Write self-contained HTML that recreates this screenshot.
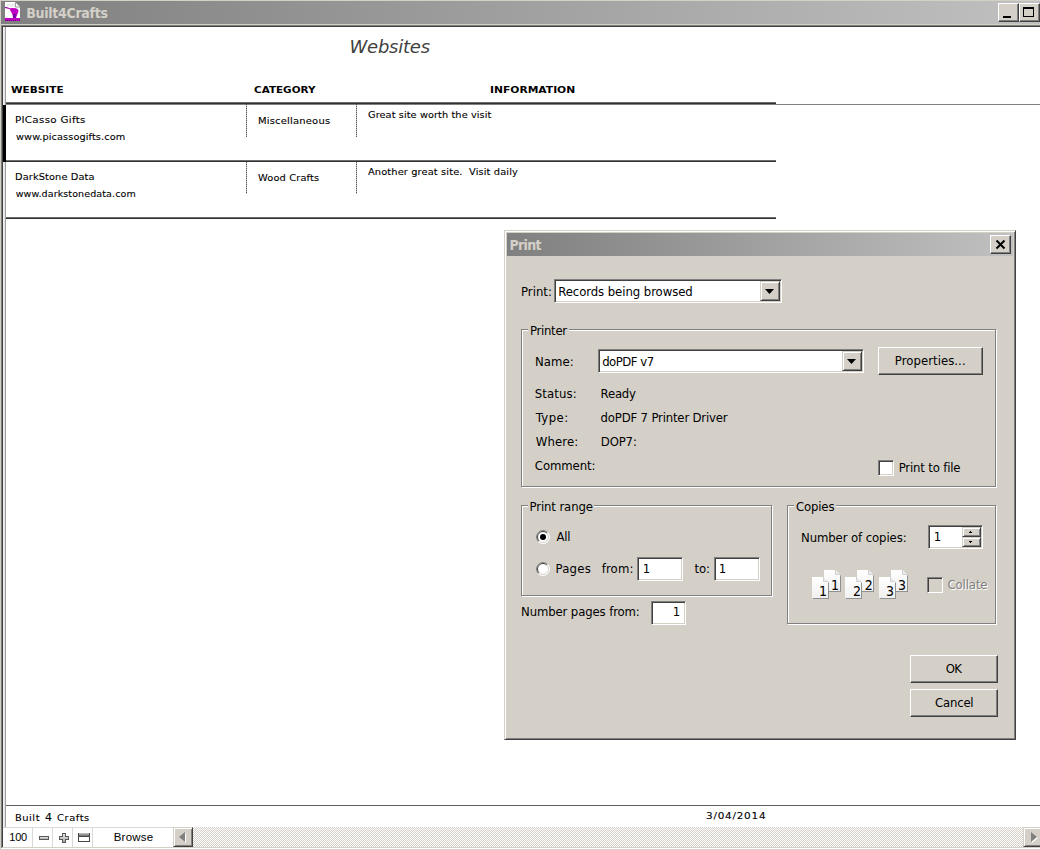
<!DOCTYPE html>
<html>
<head>
<meta charset="utf-8">
<title>Built4Crafts</title>
<style>
html,body{margin:0;padding:0;}
body{width:1040px;height:850px;overflow:hidden;background:#d4d0c8;position:relative;font-family:"DejaVu Sans","Liberation Sans",sans-serif;color:#000;}
.a{position:absolute;}
.t{position:absolute;white-space:nowrap;line-height:1;}
#titlebar{left:1px;top:1px;width:1039px;height:23px;background:linear-gradient(to right,#808080 0%,#c0c0c0 100%);}
.raised{background:#d4d0c8;box-sizing:border-box;border:1px solid;border-color:#fff #404040 #404040 #fff;box-shadow:inset -1px -1px 0 #808080;}
.raised2{background:#d4d0c8;box-sizing:border-box;border:1px solid;border-color:#d4d0c8 #404040 #404040 #d4d0c8;box-shadow:inset 1px 1px 0 #fff, inset -1px -1px 0 #808080;}
.sunken{background:#fff;box-sizing:border-box;border:1px solid;border-color:#808080 #fff #fff #808080;box-shadow:inset 1px 1px 0 #404040, inset -1px -1px 0 #d4d0c8;}
.group{box-sizing:border-box;border:1px solid #808080;border-right-color:#808080;box-shadow:1px 1px 0 #fff, inset 1px 1px 0 #fff;}
.gl{background:#d4d0c8;height:4px;}
.hline{left:6px;width:770px;height:2px;background:linear-gradient(to bottom,#6c6c6c 0,#6c6c6c 1px,#303232 1px,#303232 2px);}
.dot{width:1px;background:repeating-linear-gradient(to bottom,#505050 0,#505050 1px,#c0c0c0 1px,#c0c0c0 2px);}
.sep{top:828px;width:1px;height:19px;background:#d8d8d8;}
#track{background-color:#fff;background-image:linear-gradient(45deg,#d4d0c8 25%,transparent 25%,transparent 75%,#d4d0c8 75%),linear-gradient(45deg,#d4d0c8 25%,transparent 25%,transparent 75%,#d4d0c8 75%);background-size:2px 2px;background-position:0 0,1px 1px;}
.v{font-family:"DejaVu Sans","Liberation Sans",sans-serif;}
.k{-webkit-text-stroke:0.1px currentColor;}
.d{font-family:"DejaVu Sans Condensed","Liberation Sans",sans-serif;}
.l{font-family:"Liberation Sans",sans-serif;}
</style>
</head>
<body>
<!-- main window chrome -->
<div id="titlebar" class="a"></div>
<svg class="a" style="left:5px;top:2px" width="15" height="19" viewBox="0 0 15 19">
  <path d="M0 0H10L15 5V19H0Z" fill="#fff"/>
  <path d="M1.500 1.500H9.500V4.700H1.500Z" fill="#ececec"/>
  <path d="M10.400 0.300V5H15" fill="none" stroke="#8c8c8c" stroke-width="0.900"/>
  <path d="M0 5L1.500 5L5 6.200L5 7.300L0 6.100Z" fill="#c000c0"/>
  <path d="M0 5H1V6H0Z" fill="#5a189a"/>
  <path d="M5 6.300L7 6L11 6.200L13 7.500L13.600 9L12.500 12L11.500 14.500L11 16L8 16L7.500 13L6.500 10.500L5.200 8.500Z" fill="#c000c0"/>
  <path d="M8.300 12H10.700V16H8.300Z" fill="#6a00a0"/>
  <path d="M0 16H15V19H0Z" fill="#c000c0"/>
  <path d="M0 18.500H15" stroke="#6a007a" stroke-width="1" stroke-dasharray="1 1"/>
</svg>
<div class="a raised" style="left:998px;top:3px;width:21px;height:19px"></div>
<div class="a" style="left:1003px;top:16px;width:8px;height:2px;background:#000"></div>
<div class="a raised" style="left:1019px;top:3px;width:21px;height:19px"></div>
<div class="a" style="left:1023px;top:7px;width:11px;height:10px;box-sizing:border-box;border:1px solid #000;border-top-width:2px"></div>

<div class="a" style="left:1px;top:25px;width:1039px;height:823px;background:#808080"></div>
<div class="a" style="left:2px;top:26px;width:1038px;height:821px;background:#404040"></div>
<div class="a" style="left:3px;top:27px;width:1037px;height:820px;background:#fff"></div>
<div class="a" style="left:3px;top:27px;width:3px;height:800px;background:linear-gradient(to right,#efefef 0,#efefef 1px,#e6e6e6 1px,#e6e6e6 2px,#a0a0a0 2px,#a0a0a0 3px)"></div>

<!-- layout -->
<div class="a" style="left:6px;top:104px;width:1034px;height:1px;background:#808080"></div>
<div class="a hline" style="top:102px"></div>
<div class="a hline" style="top:160px"></div>
<div class="a hline" style="top:217px"></div>
<div class="a" style="left:3px;top:105px;width:3px;height:57px;background:#000"></div>
<div class="a dot" style="left:246px;top:104px;height:33px"></div>
<div class="a dot" style="left:356px;top:104px;height:33px"></div>
<div class="a dot" style="left:246px;top:162px;height:32px"></div>
<div class="a dot" style="left:356px;top:162px;height:32px"></div>
<div class="a" style="left:6px;top:805px;width:1034px;height:1px;background:#606060"></div>

<!-- status bar -->
<div class="a" style="left:3px;top:827px;width:1037px;height:1px;background:#d8d8d8"></div>
<div class="a sep" style="left:32px"></div>
<div class="a sep" style="left:52px"></div>
<div class="a sep" style="left:72px"></div>
<div class="a sep" style="left:92px"></div>
<svg class="a" style="left:38px;top:832px" width="54" height="12" viewBox="0 0 54 12">
  <defs><linearGradient id="ig" x1="0" y1="0" x2="0" y2="1"><stop offset="0" stop-color="#e8e8e8"/><stop offset="1" stop-color="#a8a8a8"/></linearGradient>
  <linearGradient id="wg" x1="0" y1="0" x2="0" y2="1"><stop offset="0" stop-color="#c8c8c8"/><stop offset="1" stop-color="#6c6c6c"/></linearGradient></defs>
  <rect x="1" y="4" width="10" height="4" fill="#5c5858"/><rect x="2" y="5" width="8" height="2" fill="url(#ig)"/>
  <path d="M24 1h4v3h3v4h-3v3h-4v-3h-3v-4h3z" fill="#5c5858"/><path d="M25 2h2v3h3v2h-3v3h-2v-3h-3v-2h3z" fill="url(#ig)"/>
  <rect x="40" y="1" width="12" height="9" fill="#484848"/><rect x="41" y="1" width="10" height="3" fill="url(#wg)"/><rect x="41" y="5" width="10" height="4" fill="#fff"/>
</svg>
<div id="track" class="a" style="left:193px;top:827px;width:830px;height:20px"></div>
<div class="a raised2" style="left:173px;top:827px;width:20px;height:20px"></div>
<svg class="a" style="left:178px;top:832px" width="9" height="11" viewBox="0 0 9 11"><path d="M8 1V11L2 6Z" fill="#fff"/><path d="M7 0V10L1 5Z" fill="#808080"/></svg>
<div class="a raised2" style="left:1023px;top:827px;width:20px;height:20px"></div>
<svg class="a" style="left:1030px;top:832px" width="9" height="11" viewBox="0 0 9 11"><path d="M2 1V11L8 6Z" fill="#fff"/><path d="M1 0V10L7 5Z" fill="#808080"/></svg>
<div class="a" style="left:2px;top:847px;width:1038px;height:1px;background:#d4d0c8"></div>
<div class="a" style="left:1px;top:848px;width:1039px;height:1px;background:#fff"></div>
<div class="a" style="left:0;top:849px;width:1040px;height:1px;background:#d4d0c8"></div>

<!-- dialog -->
<div class="a raised2" style="left:504px;top:230px;width:512px;height:510px"></div>
<div class="a" style="left:507px;top:233px;width:506px;height:23px;background:linear-gradient(to right,#808080 0%,#c0c0c0 100%)"></div>
<div class="a raised" style="left:990px;top:235px;width:21px;height:19px"></div>
<svg class="a" style="left:995px;top:239px" width="11" height="11" viewBox="0 0 11 11"><path d="M1.500 1.500L9.500 9.500M9.500 1.500L1.500 9.500" stroke="#000" stroke-width="2"/></svg>

<!-- print combo -->
<div class="a sunken" style="left:554px;top:279px;width:228px;height:24px"></div>
<div class="a raised2" style="left:760px;top:281px;width:20px;height:20px"></div>
<svg class="a" style="left:765px;top:289px" width="9" height="5" viewBox="0 0 9 5"><path d="M0 0H9L4.500 5Z" fill="#000"/></svg>

<!-- printer group -->
<div class="a group" style="left:521px;top:329px;width:475px;height:158px"></div>
<div class="a gl" style="left:528px;top:328px;width:41px"></div>
<div class="a sunken" style="left:598px;top:349px;width:266px;height:24px"></div>
<div class="a raised2" style="left:842px;top:351px;width:20px;height:20px"></div>
<svg class="a" style="left:847px;top:359px" width="9" height="5" viewBox="0 0 9 5"><path d="M0 0H9L4.500 5Z" fill="#000"/></svg>
<div class="a raised" style="left:878px;top:347px;width:105px;height:28px"></div>
<div class="a sunken" style="left:878px;top:460px;width:16px;height:16px"></div>

<!-- print range group -->
<div class="a group" style="left:521px;top:505px;width:251px;height:91px"></div>
<div class="a gl" style="left:528px;top:504px;width:66px"></div>
<svg class="a" style="left:536px;top:530px" width="14" height="14" viewBox="0 0 14 14">
  <circle cx="7" cy="7" r="6.500" fill="#fff"/>
  <path d="M2.400 11.600A6.500 6.500 0 0 1 11.600 2.400" fill="none" stroke="#808080" stroke-width="1"/>
  <path d="M3.100 10.900A5.500 5.500 0 0 1 10.900 3.100" fill="none" stroke="#404040" stroke-width="1"/>
  <path d="M11.600 2.400A6.500 6.500 0 0 1 2.400 11.600" fill="none" stroke="#fff" stroke-width="1"/>
  <path d="M10.900 3.100A5.500 5.500 0 0 1 3.100 10.900" fill="none" stroke="#d4d0c8" stroke-width="1"/>
  <circle cx="7" cy="7" r="3" fill="#000"/>
</svg>
<svg class="a" style="left:536px;top:562px" width="14" height="14" viewBox="0 0 14 14">
  <circle cx="7" cy="7" r="6.500" fill="#fff"/>
  <path d="M2.400 11.600A6.500 6.500 0 0 1 11.600 2.400" fill="none" stroke="#808080" stroke-width="1"/>
  <path d="M3.100 10.900A5.500 5.500 0 0 1 10.900 3.100" fill="none" stroke="#404040" stroke-width="1"/>
  <path d="M11.600 2.400A6.500 6.500 0 0 1 2.400 11.600" fill="none" stroke="#fff" stroke-width="1"/>
  <path d="M10.900 3.100A5.500 5.500 0 0 1 3.100 10.900" fill="none" stroke="#d4d0c8" stroke-width="1"/>
</svg>
<div class="a sunken" style="left:637px;top:557px;width:46px;height:24px"></div>
<div class="a sunken" style="left:714px;top:557px;width:46px;height:24px"></div>
<div class="a sunken" style="left:651px;top:601px;width:35px;height:24px"></div>

<!-- copies group -->
<div class="a group" style="left:787px;top:505px;width:209px;height:119px"></div>
<div class="a gl" style="left:794px;top:504px;width:42px"></div>
<div class="a sunken" style="left:928px;top:525px;width:55px;height:24px"></div>
<div class="a raised2" style="left:962px;top:527px;width:19px;height:10px"></div>
<div class="a raised2" style="left:962px;top:537px;width:19px;height:10px"></div>
<svg class="a" style="left:969px;top:531px" width="3" height="2" viewBox="0 0 3 2"><path d="M1 0h1v1h1v1h-3v-1h1z" fill="#000"/></svg>
<svg class="a" style="left:969px;top:541px" width="3" height="2" viewBox="0 0 3 2"><path d="M0 0h3v1h-1v1h-1v-1h-1z" fill="#000"/></svg>
<!-- page icons -->
<svg class="a" style="left:811px;top:570px" width="98" height="30" viewBox="0 0 98 30">
  <defs>
    <linearGradient id="pg" x1="0" y1="0" x2="0" y2="1"><stop offset="0" stop-color="#ffffff"/><stop offset="1" stop-color="#f0f0f0"/></linearGradient>
    <g id="pgicon">
      <path d="M1 1H12L17 6V22H1Z" fill="#909090"/>
      <path d="M0 0H11.500L16 4.500V21H0Z" fill="url(#pg)"/>
      <path d="M11.500 0V4.500H16Z" fill="#ececec"/>
      <path d="M11.500 0V4.500H16" fill="none" stroke="#c0c0c0" stroke-width="0.700"/>
    </g>
  </defs>
  <use href="#pgicon" x="13" y="0"/><use href="#pgicon" x="1" y="7"/>
  <use href="#pgicon" x="46" y="0"/><use href="#pgicon" x="34" y="7"/>
  <use href="#pgicon" x="80" y="0"/><use href="#pgicon" x="68" y="7"/>
</svg>
<div class="a" style="left:927px;top:577px;width:16px;height:16px;box-sizing:border-box;border:1px solid;border-color:#808080 #fff #fff #808080;box-shadow:inset 1px 1px 0 #404040, inset -1px -1px 0 #d4d0c8;background:#d4d0c8"></div>

<!-- buttons -->
<div class="a raised" style="left:910px;top:655px;width:88px;height:28px"></div>
<div class="a raised" style="left:910px;top:689px;width:88px;height:28px"></div>

<!-- texts -->
<div class="t d" style="left:26.2px;top:6px;font-size:14px;font-weight:bold;color:#d4d0c8;letter-spacing:-0.29px;">Built4Crafts</div>
<div class="t v" style="left:349.5px;top:38px;font-size:18px;font-style:italic;color:#404040;letter-spacing:-0.23px;">Websites</div>
<div class="t v" style="left:10.7px;top:85px;font-size:9.5px;font-weight:bold;transform:scaleX(1.107);transform-origin:0 0;">WEBSITE</div>
<div class="t v" style="left:253.7px;top:85px;font-size:9.5px;font-weight:bold;transform:scaleX(1.096);transform-origin:0 0;">CATEGORY</div>
<div class="t v" style="left:489.9px;top:85px;font-size:9.5px;font-weight:bold;transform:scaleX(1.129);transform-origin:0 0;">INFORMATION</div>
<div class="t v k" style="left:15.4px;top:115px;font-size:9.5px;letter-spacing:0.27px;transform:scaleX(1.087);transform-origin:0 0;">PICasso Gifts</div>
<div class="t v k" style="left:15.5px;top:132px;font-size:9.5px;letter-spacing:0.09px;transform:scaleX(1.026);transform-origin:0 0;">www.picassogifts.com</div>
<div class="t v k" style="left:257.5px;top:116px;font-size:9.5px;letter-spacing:0.17px;transform:scaleX(1.05);transform-origin:0 0;">Miscellaneous</div>
<div class="t v k" style="left:367.7px;top:110px;font-size:9.5px;letter-spacing:0.08px;transform:scaleX(1.027);transform-origin:0 0;">Great site worth the visit</div>
<div class="t v k" style="left:15.4px;top:172px;font-size:9.5px;letter-spacing:0.11px;transform:scaleX(1.031);transform-origin:0 0;">DarkStone Data</div>
<div class="t v k" style="left:15.7px;top:189px;font-size:9.5px;letter-spacing:0.11px;">www.darkstonedata.com</div>
<div class="t v k" style="left:257.9px;top:173px;font-size:9.5px;letter-spacing:0.13px;transform:scaleX(1.035);transform-origin:0 0;">Wood Crafts</div>
<div class="t v k" style="left:368.0px;top:167px;font-size:9.5px;letter-spacing:0.11px;transform:scaleX(1.036);transform-origin:0 0;">Another great site.&nbsp; Visit daily</div>
<div class="t v k" style="left:14.8px;top:813.5px;font-size:9px;letter-spacing:0.47px;transform:scaleX(1.1);transform-origin:0 0;">Built</div>
<div class="t v k" style="left:44.9px;top:811.5px;font-size:11px;">4</div>
<div class="t v k" style="left:57.0px;top:813.5px;font-size:9px;letter-spacing:0.52px;transform:scaleX(1.1);transform-origin:0 0;">Crafts</div>
<div class="t v k" style="left:705.8px;top:811px;font-size:9.5px;letter-spacing:0.68px;transform:scaleX(1.1);transform-origin:0 0;">3/04/2014</div>
<div class="t l" style="left:9.3px;top:831.5px;font-size:11px;letter-spacing:-0.25px;">100</div>
<div class="t l" style="left:113.7px;top:831.5px;font-size:11.5px;letter-spacing:0.24px;">Browse</div>
<div class="t d" style="left:509.5px;top:238px;font-size:14px;font-weight:bold;color:#d4d0c8;letter-spacing:-0.7px;">Print</div>
<div class="t d" style="left:521.0px;top:285px;font-size:13px;">Print:</div>
<div class="t d" style="left:558.2px;top:285px;font-size:13px;letter-spacing:-0.07px;">Records being browsed</div>
<div class="t d" style="left:530.0px;top:323.5px;font-size:13px;letter-spacing:-0.3px;">Printer</div>
<div class="t d" style="left:535.0px;top:355px;font-size:13px;letter-spacing:0.05px;">Name:</div>
<div class="t d" style="left:602.2px;top:355px;font-size:13px;letter-spacing:-0.49px;">doPDF v7</div>
<div class="t d" style="left:894.8px;top:354px;font-size:13px;letter-spacing:0.05px;">Properties...</div>
<div class="t d" style="left:534.8px;top:387px;font-size:13px;letter-spacing:0.12px;">Status:</div>
<div class="t d" style="left:600.6px;top:387px;font-size:13px;letter-spacing:-0.22px;">Ready</div>
<div class="t d" style="left:535.8px;top:411px;font-size:13px;letter-spacing:0.45px;">Type:</div>
<div class="t d" style="left:600.6px;top:411px;font-size:13px;letter-spacing:-0.18px;">doPDF 7 Printer Driver</div>
<div class="t d" style="left:535.8px;top:435px;font-size:13px;letter-spacing:0.1px;">Where:</div>
<div class="t d" style="left:600.8px;top:435px;font-size:13px;letter-spacing:-0.15px;">DOP7:</div>
<div class="t d" style="left:534.8px;top:459px;font-size:13px;letter-spacing:-0.09px;">Comment:</div>
<div class="t d" style="left:898.7px;top:461px;font-size:13px;letter-spacing:-0.17px;">Print to file</div>
<div class="t d" style="left:529.5px;top:500px;font-size:13px;letter-spacing:-0.11px;">Print range</div>
<div class="t d" style="left:556.5px;top:530px;font-size:13px;letter-spacing:-0.3px;">All</div>
<div class="t d" style="left:555.5px;top:562px;font-size:13px;letter-spacing:0.22px;">Pages</div>
<div class="t d" style="left:601.7px;top:562px;font-size:13px;letter-spacing:0.15px;">from:</div>
<div class="t d" style="left:642.8px;top:562px;font-size:13px;">1</div>
<div class="t d" style="left:694.6px;top:562px;font-size:13px;letter-spacing:-0.2px;">to:</div>
<div class="t d" style="left:718.8px;top:562px;font-size:13px;">1</div>
<div class="t d" style="left:521.0px;top:605px;font-size:13px;letter-spacing:-0.12px;">Number pages from:</div>
<div class="t d" style="left:672.7px;top:605px;font-size:13px;">1</div>
<div class="t d" style="left:796.1px;top:500px;font-size:13px;letter-spacing:-0.18px;">Copies</div>
<div class="t d" style="left:801.0px;top:531px;font-size:13px;letter-spacing:-0.1px;">Number of copies:</div>
<div class="t d" style="left:933.8px;top:530px;font-size:13px;">1</div>
<div class="t d" style="left:947.5px;top:578px;font-size:13px;color:#808080;letter-spacing:-0.12px;text-shadow:1px 1px 0 #fff;">Collate</div>
<div class="t d" style="left:945.7px;top:662px;font-size:13px;letter-spacing:-0.7px;">OK</div>
<div class="t d" style="left:935.1px;top:696px;font-size:13px;letter-spacing:-0.22px;">Cancel</div>
<div class="t d" style="left:819.1px;top:584px;font-size:14px;">1</div>
<div class="t d" style="left:830.9px;top:578px;font-size:14px;">1</div>
<div class="t d" style="left:853.0px;top:584px;font-size:14px;">2</div>
<div class="t d" style="left:864.8px;top:578px;font-size:14px;">2</div>
<div class="t d" style="left:886.1px;top:584px;font-size:14px;">3</div>
<div class="t d" style="left:898.0px;top:578px;font-size:14px;">3</div>
</body>
</html>
